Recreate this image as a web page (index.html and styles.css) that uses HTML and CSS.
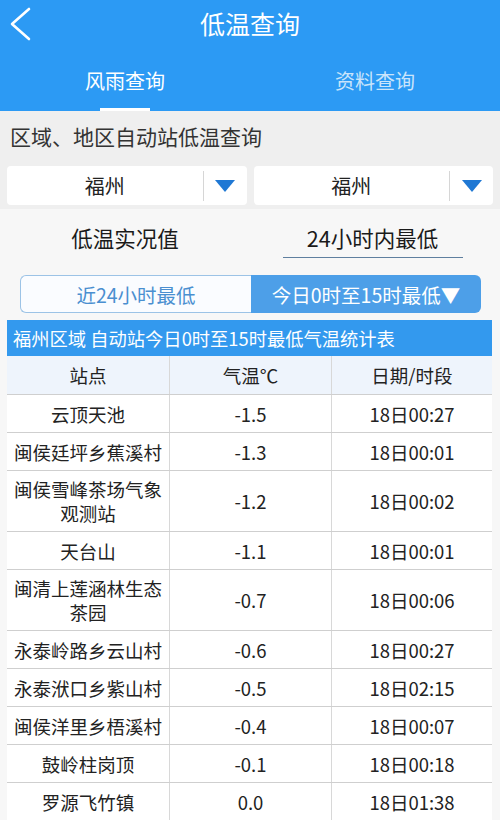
FILE: index.html
```html
<!DOCTYPE html>
<html lang="zh">
<head>
<meta charset="utf-8">
<link rel="stylesheet" href="styles.css">
</head>
<body>
<div class="app">
  <header class="topbar">
    <div class="titlerow">
      <svg class="back" width="24" height="34" viewBox="0 0 24 34"><path d="M21 2 L4 17 L21 32" fill="none" stroke="#fff" stroke-width="2.6" stroke-linecap="round" stroke-linejoin="round"/></svg>
      <h1 class="title">低温查询</h1>
    </div>
    <nav class="tabs">
      <div class="tab active">风雨查询</div>
      <div class="tab">资料查询</div>
    </nav>
  </header>
  <div class="section">区域、地区自动站低温查询</div>
  <div class="selects">
    <div class="select"><span class="sel-text">福州</span><span class="sel-btn"><span class="tri"></span></span></div>
    <div class="select"><span class="sel-text">福州</span><span class="sel-btn"><span class="tri"></span></span></div>
  </div>
  <div class="panel">
    <div class="modes">
      <div class="mode">低温实况值</div>
      <div class="mode"><span class="mode-on">24小时内最低</span></div>
    </div>
    <div class="toggle">
      <div class="tg">近24小时最低</div>
      <div class="tg tg-on">今日0时至15时最低▼</div>
    </div>
    <div class="table">
      <div class="caption">福州区域 自动站今日0时至15时最低气温统计表</div>
      <div class="row head"><div>站点</div><div>气温℃</div><div>日期/时段</div></div>
      <div class="row"><div>云顶天池</div><div>-1.5</div><div>18日00:27</div></div>
      <div class="row"><div>闽侯廷坪乡蕉溪村</div><div>-1.3</div><div>18日00:01</div></div>
      <div class="row two"><div>闽侯雪峰茶场气象观测站</div><div>-1.2</div><div>18日00:02</div></div>
      <div class="row"><div>天台山</div><div>-1.1</div><div>18日00:01</div></div>
      <div class="row two"><div>闽清上莲涵林生态茶园</div><div>-0.7</div><div>18日00:06</div></div>
      <div class="row"><div>永泰岭路乡云山村</div><div>-0.6</div><div>18日00:27</div></div>
      <div class="row"><div>永泰洑口乡紫山村</div><div>-0.5</div><div>18日02:15</div></div>
      <div class="row"><div>闽侯洋里乡梧溪村</div><div>-0.4</div><div>18日00:07</div></div>
      <div class="row"><div>鼓岭柱岗顶</div><div>-0.1</div><div>18日00:18</div></div>
      <div class="row"><div>罗源飞竹镇</div><div>0.0</div><div>18日01:38</div></div>
    </div>
  </div>
</div>
</body>
</html>
```
FILE: styles.css
```css
* { box-sizing: border-box; margin: 0; padding: 0; }
html, body { width: 500px; height: 820px; overflow: hidden; }
body {
  font-family: "Noto Sans CJK SC", "Noto Sans", sans-serif;
  background: #f7f7f7;
  color: #222;
}
.app { width: 500px; }
.topbar { background: #2c9af4; height: 111px; color: #fff; }
.titlerow { position: relative; height: 50px; display: flex; align-items: center; justify-content: center; }
.back { position: absolute; left: 8px; top: 7px; }
.title { font-size: 25px; font-weight: 400; line-height: 30px; margin-top: -4px; }
.tabs { display: flex; height: 61px; }
.tab { flex: 1; text-align: center; font-size: 20px; line-height: 26px; padding-top: 18px; color: #c9e4fb; position: relative; }
.tab.active { color: #fff; }
.tab.active::after { content: ""; position: absolute; left: 100px; width: 50px; bottom: 0; height: 3px; background: #fff; }
.section { background: #efefef; height: 51px; padding-left: 10px; font-size: 21px; line-height: 51px; color: #333; }
.selects { background: #efefef; display: flex; gap: 7px; padding: 4px 7px 4px 7px; }
.select { flex: 1; height: 39px; background: #fff; border-radius: 4px; display: flex; align-items: center; }
.sel-text { flex: 1; text-align: center; font-size: 20px; color: #222; }
.sel-btn { width: 44px; height: 30px; border-left: 1px solid #d6d6d6; display: flex; align-items: center; justify-content: center; }
.tri { width: 0; height: 0; border-left: 10px solid transparent; border-right: 10px solid transparent; border-top: 12px solid #1f78d4; }
.panel { background: #f7f7f7; padding-top: 12px; }
.modes { display: grid; grid-template-columns: 250px 250px; height: 50px; }
.mode { text-align: center; font-size: 21.5px; line-height: 34px; color: #1a1a1a; }
.mode-on { display: inline-block; width: 180px; margin-left: -5px; border-bottom: 1.5px solid #5f7f9f; height: 37px; }
.toggle { display: flex; margin: 4px 19px 0 20px; height: 38px; }
.tg { flex: 1; display: flex; align-items: center; justify-content: center; font-size: 19.5px; }
.tg:first-child { border: 1.5px solid #9cc3e6; border-right: none; border-radius: 6px 0 0 6px; color: #4a8fd0; background: #fafcff; }
.tg-on { background: #4d9fe8; color: #fff; border-radius: 0 6px 6px 0; }
.table { margin: 7px 8px 0 7px; background: #fff; }
.caption { background: #3399ee; color: #fff; font-size: 18.3px; height: 36px; line-height: 36px; padding-left: 6px; white-space: nowrap; }
.row { display: grid; grid-template-columns: 162px 162px 1fr; height: 38px; border-bottom: 1px solid #cfcfcf; }
.row.two { height: 61px; }
.row.head { height: 39px; background: #eef4fc; }
.row > div { display: flex; align-items: center; justify-content: center; text-align: center; font-size: 18.5px; line-height: 24px; padding: 0 3px; color: #222; }
.row > div + div { border-left: 1px solid #d8d8d8; }
```
